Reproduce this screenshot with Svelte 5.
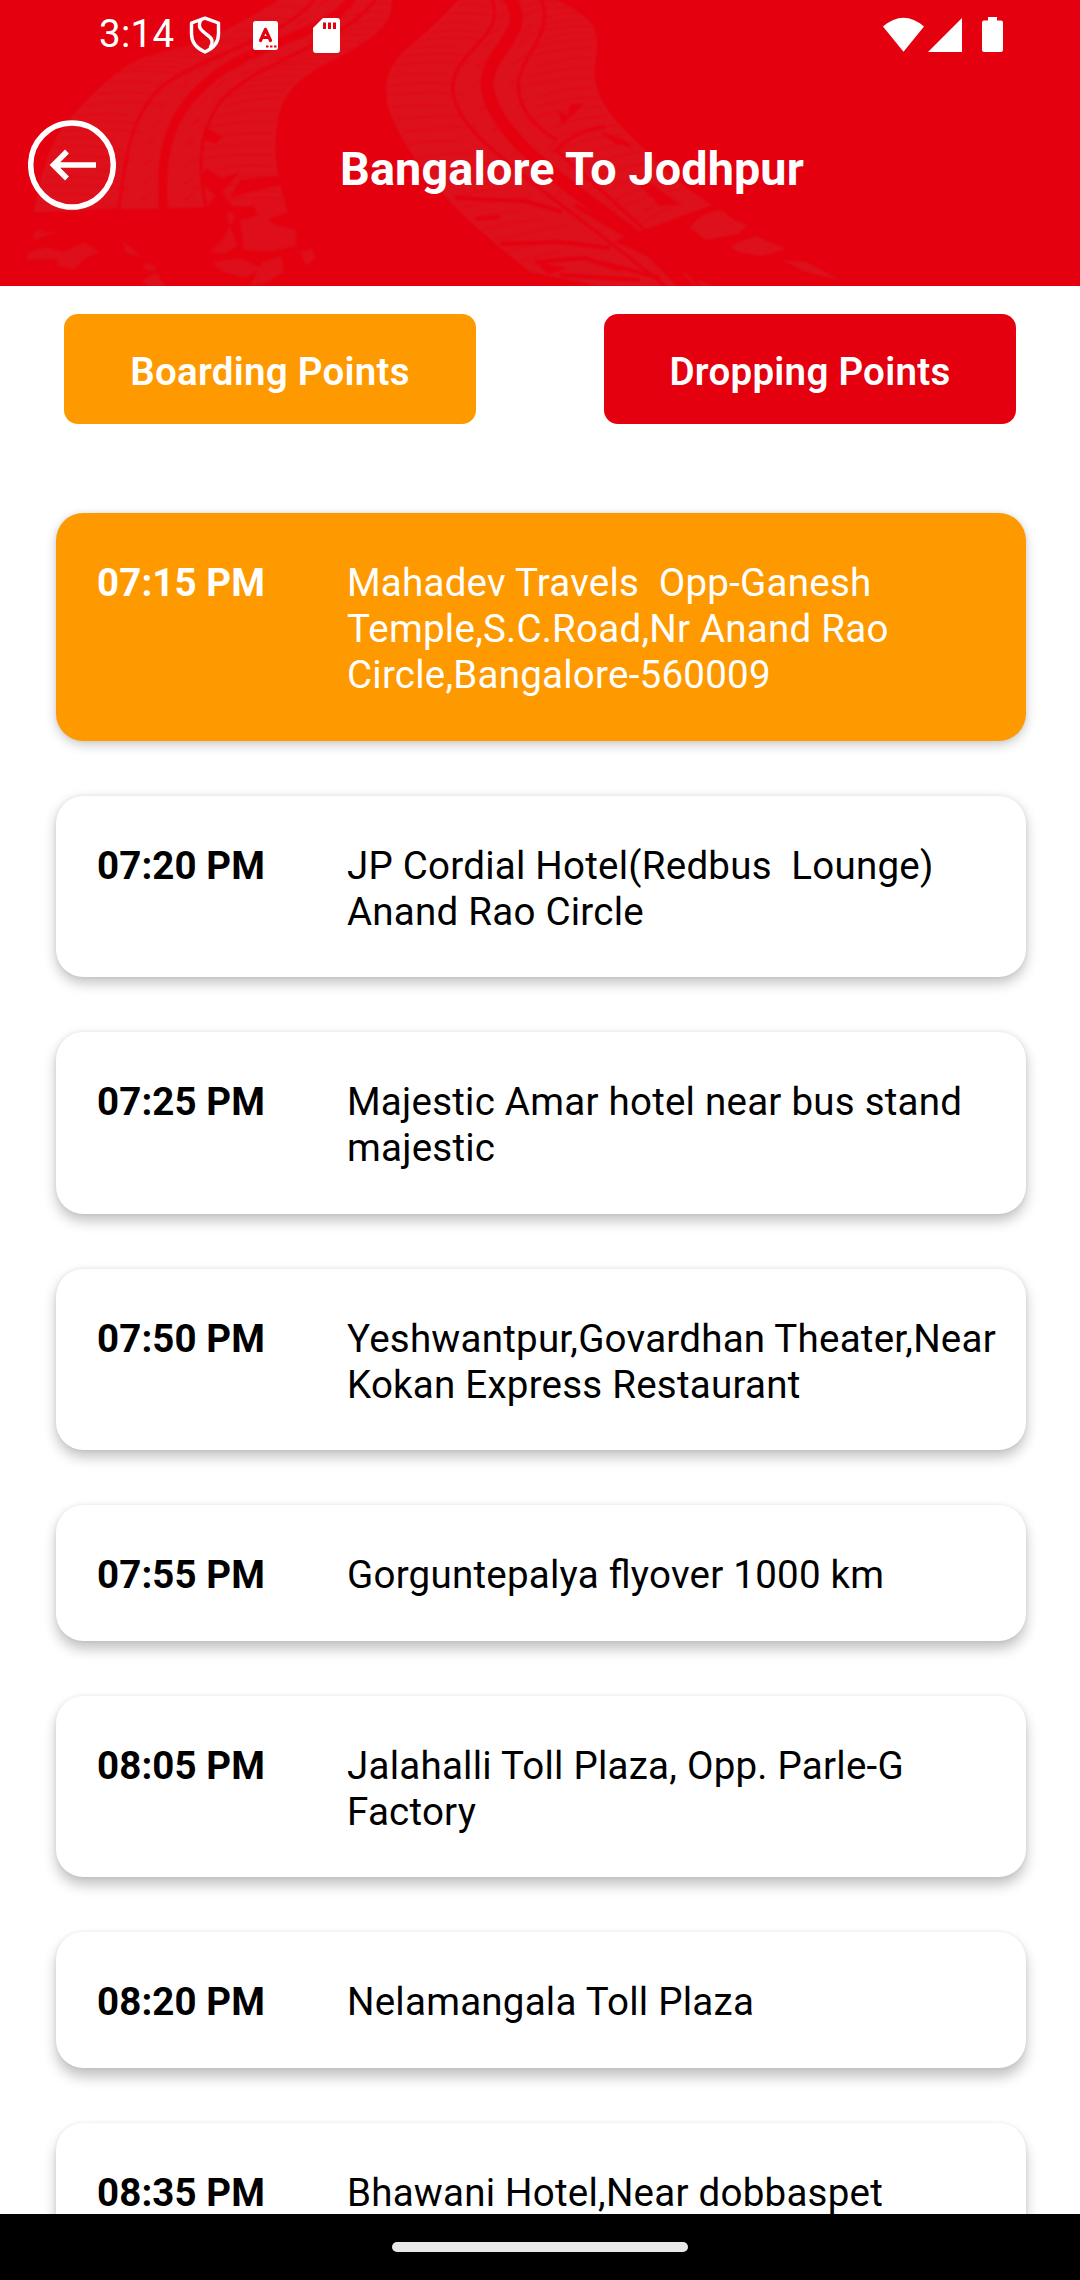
<script>
    let tab = "boarding";
    let selected = 0;

    const points = [
        { time: "07:15 PM", place: "Mahadev Travels  Opp-Ganesh Temple,S.C.Road,Nr Anand Rao Circle,Bangalore-560009" },
        { time: "07:20 PM", place: "JP Cordial Hotel(Redbus  Lounge) Anand Rao Circle" },
        { time: "07:25 PM", place: "Majestic Amar hotel near bus stand majestic" },
        { time: "07:50 PM", place: "Yeshwantpur,Govardhan Theater,Near Kokan Express Restaurant" },
        { time: "07:55 PM", place: "Gorguntepalya flyover 1000 km" },
        { time: "08:05 PM", place: "Jalahalli Toll Plaza, Opp. Parle-G Factory" },
        { time: "08:20 PM", place: "Nelamangala Toll Plaza" },
        { time: "08:35 PM", place: "Bhawani Hotel,Near dobbaspet" },
    ];

    // tyre tracks: left and right edge of each, from top to bottom
    const tracks = [
        {
            left: [[285, -4], [215, 40], [148, 54], [114, 73], [72, 115], [52, 143], [40, 180], [34, 212]],
            right: [[393, -4], [388, 26], [350, 52], [312, 70], [282, 97], [274, 140], [278, 180], [286, 205]],
        },
        {
            left: [[462, -4], [430, 30], [392, 60], [383, 97], [403, 143], [441, 193], [482, 233], [530, 272]],
            right: [[550, -4], [590, 18], [599, 42], [592, 80], [609, 115], [643, 148], [680, 185], [712, 205]],
        },
    ];

    const at = (edge, t) => {
        const p = t * (edge.length - 1);
        const i = Math.min(Math.floor(p), edge.length - 2);
        return [0, 1].map((k) => edge[i][k] + (edge[i + 1][k] - edge[i][k]) * (p - i));
    };

    // rounds the corners by curving through the middle of each segment
    const curve = (edge) => {
        let d = edge[0].join(" ");
        for (let i = 1; i < edge.length - 1; i++) {
            const [x, y] = edge[i];
            const [nx, ny] = edge[i + 1];
            d += `Q${x} ${y} ${(x + nx) / 2} ${(y + ny) / 2}`;
        }
        return d + "L" + edge[edge.length - 1].join(" ");
    };

    const outline = (t) => "M" + curve(t.left) + "L" + curve([...t.right].reverse()) + "Z";

    // short ribs on both shoulders of the track
    const ribs = (track) => {
        let d = "";
        for (let i = 1; i < 26; i++) {
            const [x1, y1] = at(track.left, i / 26);
            const [x2, y2] = at(track.right, i / 26);
            const w = x2 - x1;
            const h = y2 - y1;
            const long = 0.26 + (i % 3) * 0.05;
            d += `M${x1 + 4} ${y1}q${w * 0.15} ${h * 0.1 - 3} ${w * long} ${h * long + 4}`;
            d += `M${x2 - 3} ${y2}q${-w * 0.15} ${-h * 0.1 - 3} ${-w * long} ${-h * long + 4}`;
            if (i % 2) {
                d += `M${x1 + w * 0.42} ${y1 + h * 0.42}l11 -9M${x1 + w * 0.6} ${y1 + h * 0.6}l10 -8`;
            }
        }
        return d;
    };
</script>

<style>
    :global(body) {
        background: #fff;
    }
    .screen {
        width: 1080px;
        height: 2280px;
        display: flex;
        flex-direction: column;
        overflow: hidden;
        font-family: Roboto, sans-serif;
        font-size: 38.5px;
        line-height: 46px;
        color: #000;
    }
    svg {
        display: block;
    }
    button {
        font: inherit;
        border: 0;
        padding: 0;
        color: #fff;
    }
    .header {
        position: relative;
        flex: none;
        height: 286px;
        background: #e4000f;
        color: #fff;
    }
    .header__tracks {
        position: absolute;
        top: 0;
        left: 0;
    }
    .tracks__art {
        filter: blur(0.9px);
    }
    .status {
        position: relative;
        display: flex;
        justify-content: space-between;
        height: 70px;
        padding: 0 77px 0 99px;
    }
    .status__side {
        display: flex;
        height: 70px;
        align-items: center;
    }
    .status__time {
        width: 90px;
        height: 48px;
        line-height: 46px;
        letter-spacing: 0.3px;
    }
    .icon-keyboard {
        margin-left: 32px;
    }
    .icon-card {
        margin-left: 35px;
    }
    .header__bar {
        position: relative;
        display: flex;
        align-items: center;
        height: 90px;
        margin-top: 50px;
        padding-left: 28px;
    }
    .back {
        background: none;
    }
    .header__title {
        margin: 7px 0 0 224px;
        font-size: 46.75px;
        font-weight: 700;
        line-height: 56px;
        letter-spacing: 0.12px;
        white-space: nowrap;
    }
    .tabs {
        flex: none;
        display: flex;
        justify-content: space-between;
        padding: 29px 64px 0;
        margin-top: -1px;
    }
    .tab {
        width: 412px;
        height: 110px;
        padding-top: 6px;
        border-radius: 14px;
        background: #e4000f;
        font-weight: 600;
        letter-spacing: 0.27px;
    }
    .tab.active {
        background: #ff9900;
    }
    .list {
        flex: 1;
        min-height: 0;
        overflow: hidden;
        display: flex;
        flex-direction: column;
        gap: 55px;
        padding: 89px 54px 0 56px;
    }
    .card {
        flex: none;
        display: flex;
        padding: 47px 0 42.5px 41px;
        border-radius: 27.5px;
        background: #fff;
        box-shadow: 0 var(--drop) 13px rgba(0, 0, 0, 0.24), 0 0 4px rgba(0, 0, 0, 0.07);
    }
    .card.active {
        background: #ff9900;
        color: #fff;
        box-shadow: 0 4px 12px rgba(0, 0, 0, 0.2), 0 0 4px rgba(0, 0, 0, 0.07);
    }
    .card__time {
        width: 250px;
        font-weight: 700;
        letter-spacing: 0.1px;
    }
    .card__place {
        width: 665px;
        letter-spacing: 0.24px;
        /* letter-spacing turns the fl ligature off */
        font-feature-settings: "liga" 1;
        white-space: pre-wrap;
    }
    .nav {
        flex: none;
        display: flex;
        justify-content: center;
        height: 38px;
        padding-top: 28px;
        background: #000;
    }
    .nav__pill {
        width: 296px;
        height: 10px;
        border-radius: 5px;
        background: #e8e8e8;
    }
</style>

<div class="screen">
    <div class="header">
        <svg class="header__tracks" width="1080" height="286" fill="none">
            <g class="tracks__art">
                {#each tracks as track}
                    <path d={outline(track)} fill="#dd111c" />
                    <path d={ribs(track)} stroke="#e00a16" stroke-width="1.8" />
                {/each}
                <!-- torn tread at the end of each track -->
                <path fill="#de0e1a" d="M34 232Q50 224 72 231L50 234L34 240ZM28 252L48 247L62 252L84 242L100 252L84 259L74 270L56 266L58 259L26 260ZM122 240L134 250L142 258L126 253ZM146 262L158 268L152 272L142 268ZM222 205L236 216L222 240L210 252L224 254L238 246ZM240 220L262 214L274 224L296 230V246L270 252L244 250ZM250 200L282 198L288 212L262 222ZM212 262L240 258L262 268L246 278L222 272ZM262 262L282 256L284 272L264 284L250 286ZM142 280L156 272L166 286H146ZM300 252L312 248L316 258L306 266Z" />
                <path fill="#dd111c" d="M690 228Q700 212 722 210L734 220L748 225L738 234L706 240ZM730 246L755 236L786 249L762 256L738 252ZM782 260L806 262L840 280L806 272ZM530 272L590 230L712 286H600ZM650 190L690 194L714 206L690 206Z" />
                <g stroke="#e4000f">
                    <path stroke-width="9" d="M352 -2C330 34 255 42 212 78C170 112 158 150 164 215" />
                    <path stroke-width="3" d="M315 -2C290 36 200 56 160 88C128 120 126 160 118 212M376 -2C350 42 250 62 218 105C192 145 202 180 207 215" />
                    <path stroke-width="13" d="M508 -4C535 32 488 48 487 84C490 140 590 200 640 240L690 290" />
                    <path stroke-width="3" d="M490 -4C512 38 448 50 453 93C460 140 535 180 670 290M540 -4C560 42 504 60 522 104C530 124 550 136 556 140M700 286C660 240 600 190 556 150C570 136 585 130 606 127" />
                    <path stroke-width="4" d="M455 198L525 201L562 212M475 219L500 217M500 244L560 242L610 248M535 262L585 258L620 270M575 205L650 250M620 230L700 268M600 262L660 278M560 275L640 280" />
                </g>
                <!-- worn patches -->
                <g fill="#e4000f">
                    <path d="M558 110L567 116L571 104L584 103L575 113L562 124ZM599 131L625 140L633 148L616 144ZM631 176L650 184L680 204L660 206ZM536 262L568 268L548 274Z" />
                    <path d="M84 210L118 208L150 216L204 212L215 196L200 180L206 168L222 178L240 172L222 192L232 206L215 232H40L60 216ZM206 128L222 136L216 144L204 140ZM240 180L278 176L284 184L250 192L230 198Z" />
                </g>
            </g>
        </svg>
        <div class="status">
            <div class="status__side">
                <span class="status__time">3:14</span>
                <svg width="32" height="38" viewBox="0 0 32 38" fill="none" stroke="#fff" stroke-width="3.4" stroke-linejoin="round">
                    <path d="M16 2.2L29.5 7V18C29.5 26 24 32.500 16 36C8 32.500 2.500 26 2.500 18V7Z" />
                    <path d="M12 4C8 11 12 14 17 18C23 22 25 25 21 32" />
                </svg>
                <svg class="icon-keyboard" width="25" height="29" viewBox="0 0 25 29">
                    <rect width="25" height="29" rx="2.5" fill="#fff" />
                    <path d="M7.500 19.500L12.500 8.500L17.500 19.500M9.500 16.500H15.500" fill="none" stroke="#e4000f" stroke-width="3.2" stroke-linecap="round" stroke-linejoin="round" />
                    <path d="M13 24.500h2.500v2H13zM17 24.500h2.500v2H17zM21 24.500h2.500v2H21z" fill="#e4000f" />
                </svg>
                <svg class="icon-card" width="27" height="35" viewBox="0 0 27 35">
                    <path d="M10 0H24Q27 0 27 3V32Q27 35 24 35H3Q0 35 0 32V10Z" fill="#fff" />
                    <path d="M10 4.500h3v6.500h-3zM15 4.500h3v6.500h-3zM20 4.500h3v6.500h-3z" fill="#e4000f" />
                </svg>
            </div>
            <div class="status__side">
                <svg width="120" height="36" viewBox="0 0 120 36" fill="#fff">
                    <path d="M0 9.500Q20.500 -8 41 9.500L20.500 34.800Z" />
                    <path d="M45 35L79 1V35Z" />
                    <path d="M105 0h9v3.500h4q2 0 2 2v27.500q0 2 -2 2h-17q-2 0 -2 -2v-27.500q0 -2 2 -2h4z" />
                </svg>
            </div>
        </div>
        <div class="header__bar">
            <button class="back" aria-label="Back">
                <svg width="88" height="90" viewBox="0 0 88 90" fill="none" stroke="#fff">
                    <ellipse cx="44" cy="45" rx="41.300" ry="42" stroke-width="5.500" />
                    <path d="M68 45H25M39 31.500L25.500 45L39 58.500" stroke-width="5.500" />
                </svg>
            </button>
            <div class="header__title">Bangalore To Jodhpur</div>
        </div>
    </div>

    <div class="tabs">
        <button class="tab" class:active={tab === "boarding"} on:click={() => (tab = "boarding")}>Boarding Points</button>
        <button class="tab" class:active={tab === "dropping"} on:click={() => (tab = "dropping")}>Dropping Points</button>
    </div>

    <div class="list">
        {#each points as point, i}
            <div class="card" class:active={i === selected} style:--drop="{5 + i * 0.6}px">
                <div class="card__time">{point.time}</div>
                <div class="card__place">{point.place}</div>
            </div>
        {/each}
    </div>

    <div class="nav">
        <div class="nav__pill"></div>
    </div>
</div>
